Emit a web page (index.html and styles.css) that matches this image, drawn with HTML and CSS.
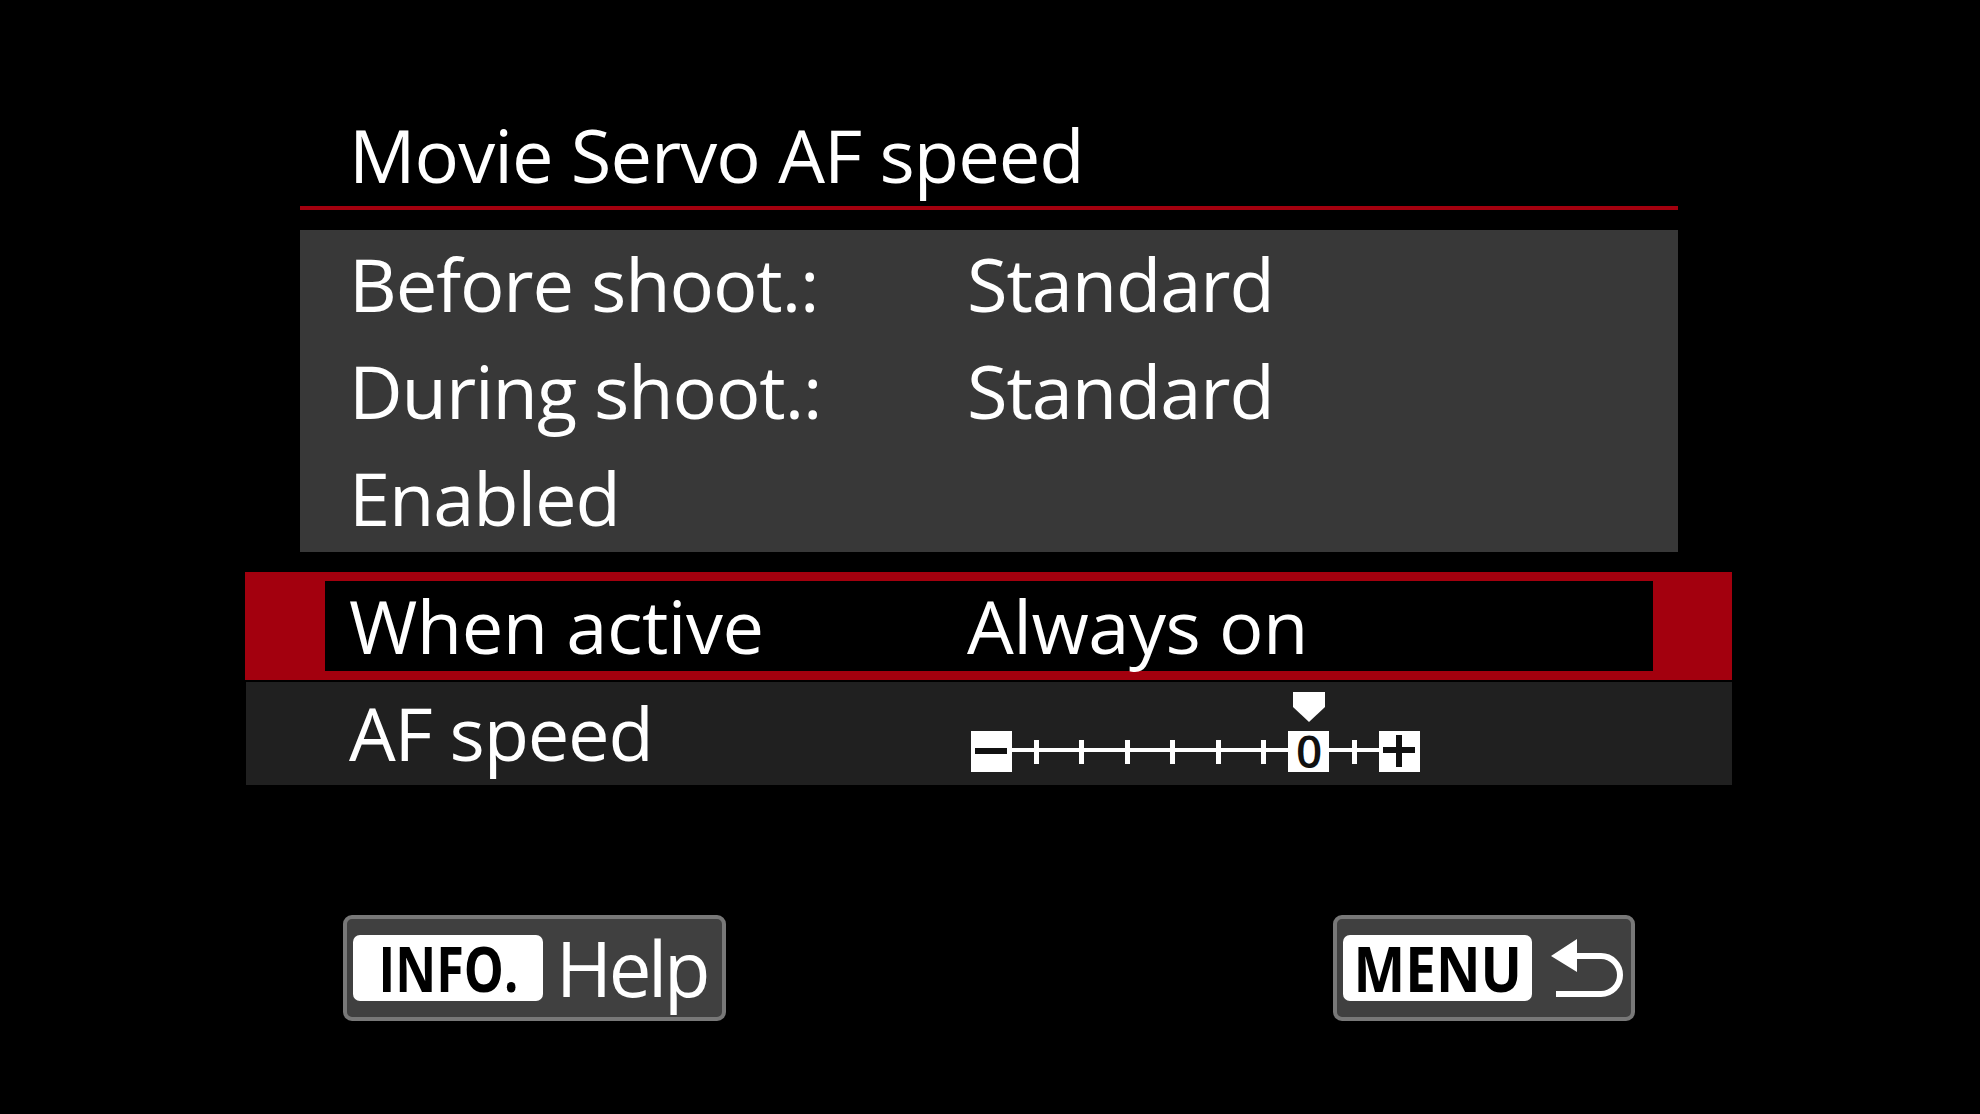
FILE: index.html
```html
<!DOCTYPE html>
<html lang="en">
<head>
<meta charset="utf-8">
<title>Movie Servo AF speed</title>
<link rel="stylesheet" href="styles.css">
</head>
<body>
<div class="screen">
  <div class="title">Movie Servo AF speed</div>

  <div class="panel">
    <div class="row"><span class="label">Before shoot.:</span><span class="value">Standard</span></div>
    <div class="row"><span class="label">During shoot.:</span><span class="value">Standard</span></div>
    <div class="row"><span class="label">Enabled</span></div>
  </div>

  <div class="selected">
    <span class="label">When active</span><span class="value">Always on</span>
  </div>

  <div class="afrow">
    <span class="label af-label">AF speed</span>
    <svg class="slider" width="460" height="90" viewBox="0 0 460 90" aria-label="AF speed 0">
      <rect x="47" y="59" width="367" height="4" fill="#fff"/>
      <rect x="69" y="51" width="5" height="24" fill="#fff"/>
      <rect x="114" y="51" width="5" height="24" fill="#fff"/>
      <rect x="160" y="51" width="5" height="24" fill="#fff"/>
      <rect x="205" y="51" width="5" height="24" fill="#fff"/>
      <rect x="251" y="51" width="5" height="24" fill="#fff"/>
      <rect x="296" y="51" width="5" height="24" fill="#fff"/>
      <rect x="387" y="51" width="5" height="24" fill="#fff"/>
      <rect x="6" y="42" width="41" height="41" fill="#fff"/>
      <rect x="10" y="59" width="32" height="6" fill="#111"/>
      <rect x="323" y="42" width="41" height="41" fill="#fff"/>
      <text x="343.5" y="79" text-anchor="middle" font-family="Open Sans, sans-serif" font-size="46" font-weight="600" fill="#111">0</text>
      <rect x="414" y="42" width="41" height="41" fill="#fff"/>
      <rect x="418" y="58" width="32" height="6" fill="#111"/>
      <rect x="431" y="46" width="6" height="32" fill="#111"/>
      <polygon points="328,3 360,3 360,18 344,33 328,18" fill="#fff"/>
    </svg>
  </div>

  <div class="keys">
    <div class="key key-info">
      <span class="keycap"><span class="keytext keytext-info">INFO.</span></span>
      <span class="keylabel">Help</span>
    </div>
    <div class="key key-menu">
      <span class="keycap"><span class="keytext keytext-menu">MENU</span></span>
      <svg class="return" width="76" height="66" viewBox="0 0 76 66" aria-label="back">
        <polygon points="2,21 28,4 28,37" fill="#fff"/>
        <path d="M26 21 H52 A19 19 0 0 1 52 59 H7" fill="none" stroke="#fff" stroke-width="6"/>
      </svg>
    </div>
  </div>
</div>
</body>
</html>
```

FILE: styles.css
```css
html, body {
  margin: 0;
  padding: 0;
  background: #000;
}

body {
  width: 1980px;
  height: 1114px;
  overflow: hidden;
  font-family: "Open Sans", "Noto Sans", sans-serif;
  color: #fff;
}

.screen {
  display: flex;
  flex-direction: column;
  padding-top: 103px;
}

.title {
  margin-left: 300px;
  width: 1378px;
  box-sizing: border-box;
  padding-left: 49px;
  font-size: 74px;
  line-height: 103px;
  height: 107px;
  letter-spacing: -0.95px;
  border-bottom: 4px solid #a3000e;
  white-space: nowrap;
}

.panel {
  margin: 20px 0 0 300px;
  width: 1378px;
  box-sizing: border-box;
  background: #383838;
  padding: 0 0 1px 49px;
}

.row {
  display: flex;
  height: 107px;
  line-height: 107px;
  font-size: 74px;
  letter-spacing: -1.1px;
  white-space: nowrap;
}

.label {
  width: 618px;
  flex: none;
}

.selected {
  margin: 20px 0 0 245px;
  width: 1487px;
  height: 108px;
  box-sizing: border-box;
  border-style: solid;
  border-color: #a3000e;
  border-width: 9px 79px 9px 80px;
  background: #000;
  padding-left: 24px;
  display: flex;
  font-size: 74px;
  line-height: 90px;
  letter-spacing: -0.5px;
  white-space: nowrap;
}

.afrow {
  margin: 2px 0 0 246px;
  width: 1486px;
  height: 103px;
  box-sizing: border-box;
  background: #202020;
  padding-left: 103px;
  display: flex;
  align-items: flex-start;
  font-size: 74px;
  letter-spacing: -1.2px;
  white-space: nowrap;
}

.af-label {
  width: 616px;
  line-height: 101px;
}

.slider {
  display: block;
  margin-top: 7px;
}

.keys {
  margin: 130px 0 0 343px;
  width: 1292px;
  display: flex;
  justify-content: space-between;
}

.key {
  height: 106px;
  box-sizing: border-box;
  border: 4px solid #787878;
  border-radius: 9px;
  background: #404040;
  display: flex;
  align-items: center;
  padding: 0 6px;
}

.key-info {
  width: 383px;
}

.key-menu {
  width: 302px;
}

.keycap {
  flex: none;
  width: 190px;
  height: 66px;
  background: #fff;
  color: #000;
  border-radius: 7px;
  display: flex;
  align-items: center;
  justify-content: center;
  font-weight: 700;
  font-size: 63px;
  line-height: 66px;
}

.key-menu .keycap {
  width: 189px;
}

.keytext {
  display: inline-block;
  white-space: nowrap;
}

.keytext-info {
  transform: scaleX(0.8);
}

.keytext-menu {
  transform: scaleX(0.87);
}

.keylabel {
  margin-left: 13px;
  font-size: 76px;
  line-height: 98px;
  letter-spacing: -3.3px;
}

.return {
  display: block;
  margin-left: 17px;
}
```
